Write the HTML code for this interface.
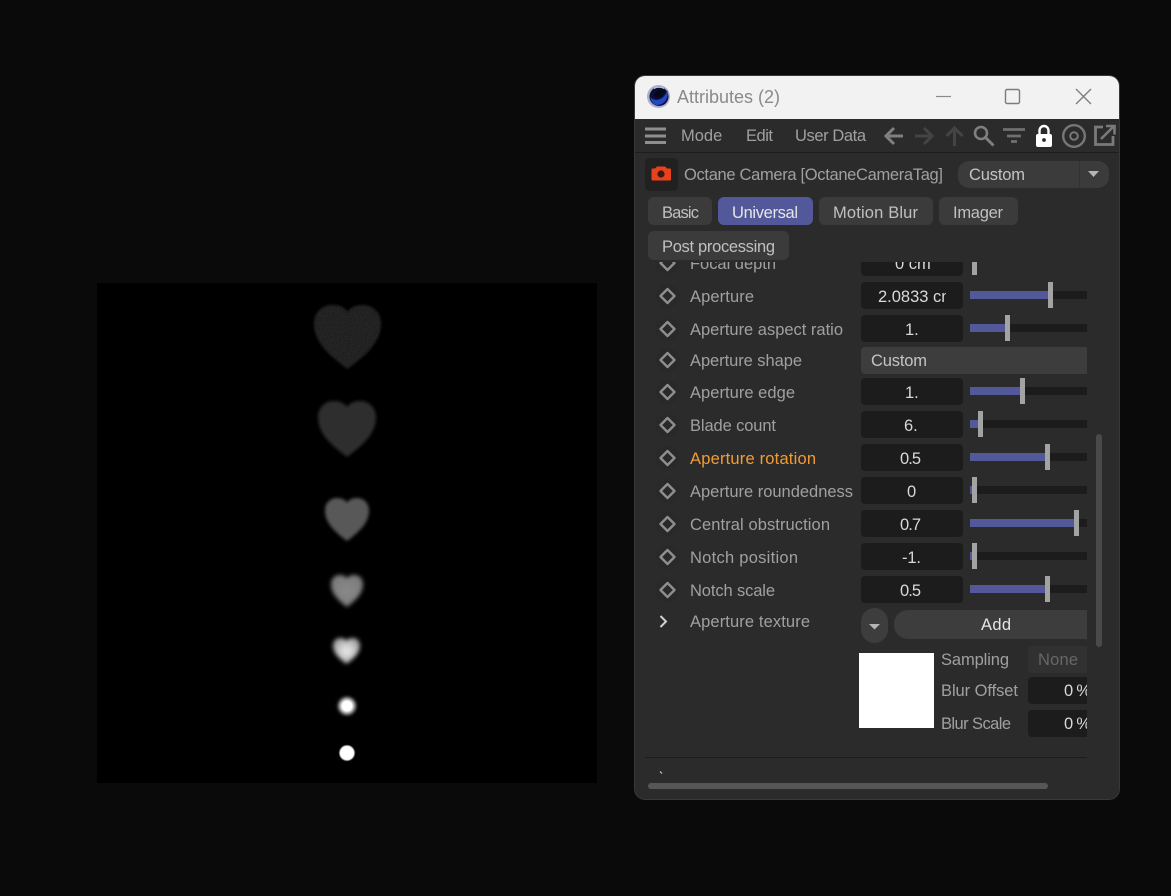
<!DOCTYPE html>
<html><head><meta charset="utf-8"><title>Attributes</title>
<style>
html,body{margin:0;padding:0;background:#0a0a0a;width:1171px;height:896px;overflow:hidden}
svg{display:block}
text{font-family:"Liberation Sans",sans-serif;font-size:16.5px;fill:#a0a0a0}
.v{fill:#d9d9d9}
.ib{fill:#1c1c1c}
.tr{fill:#1c1c1c}
.fl{fill:#52589a}
.hd{fill:#a3a3a3}
.dm{fill:none;stroke:#8e8e8e;stroke-width:2.4;stroke-linejoin:round}
.rg{fill:#292929}
.tab{fill:#3b3b3b}
</style></head><body>
<svg width="1171" height="896" viewBox="0 0 1171 896" xmlns="http://www.w3.org/2000/svg">
<defs>
<path id="h" d="M50 100C26 81 0 60 0 29C0 11 13 0 27 0C38 0 46 4 50 11C54 4 62 0 73 0C87 0 100 11 100 29C100 60 74 81 50 100Z"/>
<filter id="n1" x="-20%" y="-20%" width="140%" height="140%">
<feGaussianBlur in="SourceGraphic" stdDeviation="1.2" result="a"/>
<feTurbulence type="fractalNoise" baseFrequency=".8" numOctaves="2" seed="3" result="t"/>
<feColorMatrix in="t" type="matrix" values="0 0 0 0 0 0 0 0 0 0 0 0 0 0 0 .7 0 0 0 .55" result="m"/>
<feComposite in="a" in2="m" operator="in"/>
</filter>
<filter id="n2" x="-20%" y="-20%" width="140%" height="140%">
<feGaussianBlur in="SourceGraphic" stdDeviation="1.5"/>
</filter>
<filter id="b1" x="-20%" y="-20%" width="140%" height="140%"><feGaussianBlur stdDeviation="1.6"/></filter>
<filter id="b2" x="-30%" y="-30%" width="160%" height="160%"><feGaussianBlur stdDeviation="2.1"/></filter>
<filter id="b3" x="-40%" y="-40%" width="180%" height="180%"><feGaussianBlur stdDeviation="2.2"/></filter>
<filter id="b4" x="-50%" y="-50%" width="200%" height="200%"><feGaussianBlur stdDeviation="1.8"/></filter>
<filter id="b5" x="-50%" y="-50%" width="200%" height="200%"><feGaussianBlur stdDeviation=".6"/></filter>
<radialGradient id="g5" cx=".5" cy=".5" r=".5"><stop offset="0" stop-color="#ececec"/><stop offset=".6" stop-color="#c4c4c4"/><stop offset="1" stop-color="#a0a0a0"/></radialGradient>
<radialGradient id="g4" cx=".5" cy=".5" r=".55"><stop offset="0" stop-color="#8a8a8a"/><stop offset="1" stop-color="#7a7a7a"/></radialGradient>
<clipPath id="win"><rect x="635" y="76" width="484" height="723" rx="10"/></clipPath>
<clipPath id="cont"><rect x="640" y="262" width="447" height="490"/></clipPath>
<clipPath id="cm"><rect x="861" y="270" width="85" height="50"/></clipPath>
</defs>

<rect width="1171" height="896" fill="#0a0a0a"/>
<rect x="97" y="283" width="500" height="500" fill="#000"/>

<g filter="url(#n1)"><use href="#h" transform="translate(314 305) scale(.67 .64)" fill="#262626"/></g>
<g filter="url(#n2)"><use href="#h" transform="translate(318 401) scale(.58 .56)" fill="#2d2d2d"/></g>
<g filter="url(#b1)"><use href="#h" transform="translate(325 498) scale(.44 .43)" fill="#585858"/></g>
<g filter="url(#b2)"><use href="#h" transform="translate(331 575) scale(.32 .32)" fill="url(#g4)"/></g>
<g filter="url(#b2)"><use href="#h" transform="translate(333 638) scale(.27 .26)" fill="url(#g5)"/></g>
<circle cx="347" cy="706" r="8.500" fill="#d8d8d8" filter="url(#b4)"/>
<circle cx="347" cy="706" r="5.500" fill="#fff" filter="url(#b5)"/>
<circle cx="347" cy="753" r="7.600" fill="#fff" filter="url(#b5)"/>

<!-- window -->
<rect x="634" y="75" width="486" height="725" rx="11" fill="#383838"/>
<g clip-path="url(#win)">
<rect x="635" y="76" width="484" height="723" fill="#2b2b2b"/>
<rect x="635" y="76" width="484" height="43" fill="#f2f2f2"/>
<rect x="635" y="152" width="484" height="1" fill="#1d1d1d"/>
</g>

<!-- title -->
<circle cx="658.500" cy="96.500" r="11.500" fill="#a9aec6"/>
<circle cx="659" cy="96.500" r="9.500" fill="#0b0f38"/>
<path d="M650.500 97C654 102 664 101 667.500 90C669 99 664 105 657 105C653 105 651 101 650.500 97Z" fill="#2348c4"/>
<path d="M655 92C659 89 664 89 665 91C665 95 660 98 656 97.500C654 96.500 654 94 655 92Z" fill="#050818"/>
<path d="M654 88.500C657 87 661 87 664 88.500" stroke="#c8cce0" stroke-width="1" fill="none"/>
<text x="677" y="103" textLength="103" style="font-size:18px;fill:#8a8a8a">Attributes (2)</text>
<path d="M936 96.500H951" stroke="#8a8a8a" stroke-width="1.200"/>
<rect x="1005.500" y="89.500" width="14" height="14" rx="1.500" fill="none" stroke="#7c7c7c" stroke-width="1.400"/>
<path d="M1076 89L1091 104M1091 89L1076 104" stroke="#7c7c7c" stroke-width="1.300" fill="none"/>

<!-- toolbar -->
<path d="M645 129H666M645 136H666M645 142.500H666" stroke="#8f8f8f" stroke-width="3"/>
<text x="681" y="141">Mode</text>
<text x="746" y="141" textLength="27">Edit</text>
<text x="795" y="141" textLength="71">User Data</text>
<path d="M903 136H887M894 128L886 136L894 144" stroke="#7f7f7f" stroke-width="3" fill="none"/>
<path d="M915 136H931M924 128L932 136L924 144" stroke="#444" stroke-width="3" fill="none"/>
<path d="M954.500 146V129M946.500 136L954.500 128L962.500 136" stroke="#444" stroke-width="3" fill="none"/>
<circle cx="981" cy="133" r="6" fill="none" stroke="#7f7f7f" stroke-width="2.600"/>
<path d="M985.500 137.500L993.500 145.500" stroke="#7f7f7f" stroke-width="3"/>
<path d="M1003 129.500H1025M1007 136H1021M1011 141.500H1017" stroke="#707070" stroke-width="2.800"/>
<rect x="1036" y="134" width="16" height="13" rx="2" fill="#fff"/>
<path d="M1039.500 135V130.500a4.500 4.500 0 0 1 9 0V135" fill="none" stroke="#fff" stroke-width="2.400"/>
<circle cx="1044" cy="140" r="1.900" fill="#2b2b2b"/>
<circle cx="1074" cy="136" r="10.800" fill="none" stroke="#777" stroke-width="2.400"/>
<circle cx="1074" cy="136" r="3.800" fill="none" stroke="#777" stroke-width="2"/>
<path d="M1103 127H1095.500V144.500H1113V136" fill="none" stroke="#7a7a7a" stroke-width="2.800"/>
<path d="M1101 139L1113 127M1106 126H1114.500V134.500" fill="none" stroke="#7a7a7a" stroke-width="2.600"/>

<!-- header -->
<rect x="645" y="158" width="33" height="33" rx="5" fill="#212121"/>
<path d="M651.500 169.500a1 1 0 0 1 1-1H655L657 166.500H665L667 168.500H670a1 1 0 0 1 1 1V179.500a1 1 0 0 1-1 1H652.500a1 1 0 0 1-1-1Z" fill="#e8411c"/>
<circle cx="661" cy="174" r="3.600" fill="#3a1a10"/>
<text x="684" y="180" textLength="259">Octane Camera [OctaneCameraTag]</text>
<rect x="958" y="161" width="151" height="27" rx="11" fill="#3b3b3b"/>
<rect x="1079" y="161" width="1" height="27" fill="#323232"/>
<text x="969" y="180" textLength="56" style="fill:#c4c4c4">Custom</text>
<path d="M1088 171H1099L1093.500 177Z" fill="#b5b5b5"/>

<!-- tabs -->
<rect class="tab" x="648" y="197" width="64" height="28" rx="6"/>
<text x="662" y="218" textLength="37" style="fill:#c0c0c0">Basic</text>
<rect x="718" y="197" width="95" height="28" rx="6" fill="#52589a"/>
<text x="732" y="218" textLength="66" style="fill:#e6e6e6">Universal</text>
<rect class="tab" x="819" y="197" width="114" height="28" rx="6"/>
<text x="833" y="218" textLength="85" style="fill:#c0c0c0">Motion Blur</text>
<rect class="tab" x="939" y="197" width="79" height="28" rx="6"/>
<text x="953" y="218" textLength="50" style="fill:#c0c0c0">Imager</text>
<rect class="tab" x="648" y="231" width="141" height="29" rx="6"/>
<text x="662" y="252" textLength="113" style="fill:#c0c0c0">Post processing</text>

<g clip-path="url(#cont)">
<!-- focal depth -->
<circle class="rg" cx="667.500" cy="263" r="12"/>
<path class="dm" d="M667.500 256L674.500 263L667.500 270L660.500 263Z"/>
<text x="690" y="269" textLength="86">Focal depth</text>
<rect class="ib" x="861" y="249" width="102" height="27" rx="4"/>
<text class="v" x="895" y="269">0 cm</text>
<rect class="hd" x="972" y="249" width="5" height="26"/>

<!-- Aperture -->
<circle class="rg" cx="667.500" cy="296" r="12"/>
<path class="dm" d="M667.500 289L674.500 296L667.500 303L660.500 296Z"/>
<text x="690" y="302" textLength="64">Aperture</text>
<rect class="ib" x="861" y="282" width="102" height="27" rx="4"/>
<g clip-path="url(#cm)"><text class="v" x="878" y="302" textLength="77">2.0833 cm</text></g>
<rect class="tr" x="970" y="291" width="117" height="8"/><rect class="fl" x="970" y="291" width="80" height="8"/><rect class="hd" x="1048" y="282" width="5" height="26"/>

<!-- aspect -->
<circle class="rg" cx="667.500" cy="329" r="12"/>
<path class="dm" d="M667.500 322L674.500 329L667.500 336L660.500 329Z"/>
<text x="690" y="335" textLength="153">Aperture aspect ratio</text>
<rect class="ib" x="861" y="315" width="102" height="27" rx="4"/>
<text class="v" x="905" y="335">1.</text>
<rect class="tr" x="970" y="324" width="117" height="8"/><rect class="fl" x="970" y="324" width="37" height="8"/><rect class="hd" x="1005" y="315" width="5" height="26"/>

<!-- shape -->
<circle class="rg" cx="667.500" cy="360" r="12"/>
<path class="dm" d="M667.500 353L674.500 360L667.500 367L660.500 360Z"/>
<text x="690" y="366" textLength="112">Aperture shape</text>
<rect x="861" y="347" width="240" height="27" rx="4" fill="#3d3d3d"/>
<text x="871" y="366" textLength="56" style="fill:#c4c4c4">Custom</text>

<!-- edge -->
<circle class="rg" cx="667.500" cy="392" r="12"/>
<path class="dm" d="M667.500 385L674.500 392L667.500 399L660.500 392Z"/>
<text x="690" y="398" textLength="105">Aperture edge</text>
<rect class="ib" x="861" y="378" width="102" height="27" rx="4"/>
<text class="v" x="905" y="398">1.</text>
<rect class="tr" x="970" y="387" width="117" height="8"/><rect class="fl" x="970" y="387" width="52" height="8"/><rect class="hd" x="1020" y="378" width="5" height="26"/>

<!-- blade -->
<circle class="rg" cx="667.500" cy="425" r="12"/>
<path class="dm" d="M667.500 418L674.500 425L667.500 432L660.500 425Z"/>
<text x="690" y="431" textLength="86">Blade count</text>
<rect class="ib" x="861" y="411" width="102" height="27" rx="4"/>
<text class="v" x="904" y="431">6.</text>
<rect class="tr" x="970" y="420" width="117" height="8"/><rect class="fl" x="970" y="420" width="10" height="8"/><rect class="hd" x="978" y="411" width="5" height="26"/>

<!-- rotation -->
<circle class="rg" cx="667.500" cy="458" r="12"/>
<path class="dm" d="M667.500 451L674.500 458L667.500 465L660.500 458Z"/>
<text x="690" y="464" textLength="126" style="fill:#f39c33">Aperture rotation</text>
<rect class="ib" x="861" y="444" width="102" height="27" rx="4"/>
<text class="v" x="900" y="464" textLength="21">0.5</text>
<rect class="tr" x="970" y="453" width="117" height="8"/><rect class="fl" x="970" y="453" width="77" height="8"/><rect class="hd" x="1045" y="444" width="5" height="26"/>

<!-- roundedness -->
<circle class="rg" cx="667.500" cy="491" r="12"/>
<path class="dm" d="M667.500 484L674.500 491L667.500 498L660.500 491Z"/>
<text x="690" y="497" textLength="163">Aperture roundedness</text>
<rect class="ib" x="861" y="477" width="102" height="27" rx="4"/>
<text class="v" x="907" y="497">0</text>
<rect class="tr" x="970" y="486" width="117" height="8"/><rect class="fl" x="970" y="486" width="4" height="8"/><rect class="hd" x="972" y="477" width="5" height="26"/>

<!-- central -->
<circle class="rg" cx="667.500" cy="524" r="12"/>
<path class="dm" d="M667.500 517L674.500 524L667.500 531L660.500 524Z"/>
<text x="690" y="530" textLength="140">Central obstruction</text>
<rect class="ib" x="861" y="510" width="102" height="27" rx="4"/>
<text class="v" x="900" y="530" textLength="21">0.7</text>
<rect class="tr" x="970" y="519" width="117" height="8"/><rect class="fl" x="970" y="519" width="106" height="8"/><rect class="hd" x="1074" y="510" width="5" height="26"/>

<!-- notch pos -->
<circle class="rg" cx="667.500" cy="557" r="12"/>
<path class="dm" d="M667.500 550L674.500 557L667.500 564L660.500 557Z"/>
<text x="690" y="563" textLength="108">Notch position</text>
<rect class="ib" x="861" y="543" width="102" height="27" rx="4"/>
<text class="v" x="902" y="563" textLength="19">-1.</text>
<rect class="tr" x="970" y="552" width="117" height="8"/><rect class="fl" x="970" y="552" width="4" height="8"/><rect class="hd" x="972" y="543" width="5" height="26"/>

<!-- notch scale -->
<circle class="rg" cx="667.500" cy="590" r="12"/>
<path class="dm" d="M667.500 583L674.500 590L667.500 597L660.500 590Z"/>
<text x="690" y="596" textLength="85">Notch scale</text>
<rect class="ib" x="861" y="576" width="102" height="27" rx="4"/>
<text class="v" x="900" y="596" textLength="21">0.5</text>
<rect class="tr" x="970" y="585" width="117" height="8"/><rect class="fl" x="970" y="585" width="77" height="8"/><rect class="hd" x="1045" y="576" width="5" height="26"/>

<!-- texture -->
<path d="M660.500 616L666 621.500L660.500 627" fill="none" stroke="#d0d0d0" stroke-width="2"/>
<text x="690" y="627" textLength="120">Aperture texture</text>
<rect x="861" y="608" width="27" height="35" rx="13.500" fill="#3d3d3d"/>
<path d="M869 624H880L874.500 629.500Z" fill="#b5b5b5"/>
<rect x="894" y="610" width="230" height="29" rx="14" fill="#3d3d3d"/>
<text x="981" y="630" textLength="30" style="fill:#e6e6e6">Add</text>

<rect x="859" y="653" width="75" height="75" fill="#fff"/>
<text x="941" y="665" textLength="68">Sampling</text>
<rect x="1028" y="646" width="80" height="27" rx="4" fill="#313131"/>
<text x="1038" y="665" textLength="40" style="fill:#666">None</text>
<text x="941" y="696" textLength="77">Blur Offset</text>
<rect class="ib" x="1028" y="677" width="80" height="27" rx="4"/>
<text class="v" x="1064" y="696" textLength="27">0 %</text>
<text x="941" y="729" textLength="70">Blur Scale</text>
<rect class="ib" x="1028" y="710" width="80" height="27" rx="4"/>
<text class="v" x="1064" y="729" textLength="27">0 %</text>
</g>

<!-- bottom -->
<rect x="645" y="757" width="442" height="1" fill="#1c1c1c"/>
<path d="M660 771.500L662 773.500" stroke="#c8c8c8" stroke-width="1.200"/>
<rect x="648" y="783" width="400" height="6" rx="3" fill="#565656"/>
<rect x="1096" y="434" width="6" height="213" rx="3" fill="#4a4a4a"/>
</svg>
</body></html>
